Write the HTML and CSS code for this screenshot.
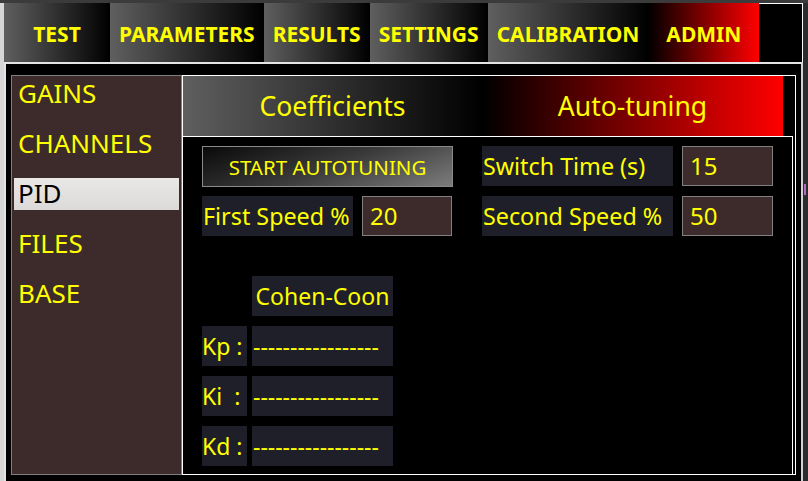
FILE: index.html
```html
<!DOCTYPE html>
<html lang="en">
<head>
  <meta charset="UTF-8" />
  <title>PID - Auto-tuning</title>
  <link rel="stylesheet" href="styles.css">
</head>
<body>
  <div class="edge"></div>
  <div class="app">
    <div class="tabbar">
      <div class="tab">TEST</div>
      <div class="tab">PARAMETERS</div>
      <div class="tab">RESULTS</div>
      <div class="tab">SETTINGS</div>
      <div class="tab">CALIBRATION</div>
      <div class="tab tab-admin">ADMIN</div>
      <div class="tab-fill"></div>
    </div>

    <div class="panel">
      <div class="sidebar">
        <div class="side-item">GAINS</div>
        <div class="side-item">CHANNELS</div>
        <div class="side-item active">PID</div>
        <div class="side-item">FILES</div>
        <div class="side-item">BASE</div>
      </div>

      <div class="pid">
        <div class="pid-tabs">
          <div class="pid-tab">Coefficients</div>
          <div class="pid-tab pid-tab-on">Auto-tuning</div>
        </div>
        <div class="pane">
          <div class="top-rows">
            <div class="col-left">
              <button class="start-btn">START AUTOTUNING</button>
              <div class="field">
                <div class="label label-first">First Speed %</div>
                <div class="input input-first">20</div>
              </div>
            </div>
            <div class="col-right">
              <div class="field">
                <div class="label label-wide">Switch Time (s)</div>
                <div class="input">15</div>
              </div>
              <div class="field">
                <div class="label label-wide">Second Speed %</div>
                <div class="input">50</div>
              </div>
            </div>
          </div>

          <div class="coef-table">
            <div></div>
            <div class="cell head">Cohen-Coon</div>
            <div class="cell key">Kp :</div>
            <div class="cell val">-----------------</div>
            <div class="cell key">Ki&nbsp;&nbsp;:</div>
            <div class="cell val">-----------------</div>
            <div class="cell key">Kd :</div>
            <div class="cell val">-----------------</div>
          </div>
        </div>
      </div>
    </div>
  </div>
  <div class="grip"></div>
</body>
</html>
```

FILE: styles.css
```css
body {
  margin: 0;
  height: 481px;
  overflow: hidden;
  display: flex;
  background-color: #2c2c2e;
  font-family: "Noto Sans", "DejaVu Sans", sans-serif;
  color: #ff0;
}
.edge {
  width: 4px;
  background-color: #d6d6d6;
}
.app {
  width: 799px;
  margin-top: 3px;
  display: flex;
  flex-direction: column;
}
body::before {
  content: "";
  position: fixed;
  top: 0; left: 0;
  width: 100%; height: 3px;
  background-color: #3b3b3b;
}

/* main tab bar */
.tabbar {
  display: flex;
  height: 59px;
  background-color: #000;
}
.tab {
  box-sizing: border-box;
  min-width: 106px;
  padding: 3px 9px 0;
  line-height: 56px;
  text-align: center;
  font-size: 21px;
  font-weight: bold;
  background: linear-gradient(to right, #5f5f5f, #000);
}
.tab-admin {
  min-width: 111px;
  background: linear-gradient(to right, #000, #f00);
}
.tab-fill {
  flex: 1;
  border-top: 1px solid #fff;
  border-right: 1px solid #fff;
}

/* content */
.panel {
  flex: 1;
  display: flex;
  align-items: flex-start;
  padding: 11px 0 0 5px;
  background-color: #000;
  border-top: 2px solid #e4e4e4;
  border-left: 2px solid #e4e4e4;
  border-right: 2px solid #d2d2d2;
}
.sidebar {
  box-sizing: border-box;
  width: 171px;
  height: 400px;
  padding: 2px;
  background-color: #3d2b2b;
  border: 1px solid #808080;
  display: flex;
  flex-direction: column;
  gap: 18px;
}
.side-item {
  height: 32px;
  line-height: 30px;
  padding-left: 4px;
  font-size: 26px;
}
.side-item.active {
  color: #000;
  background: linear-gradient(#eae8e6, #dcdad8);
}

.pid {
  box-sizing: border-box;
  width: 614px;
  height: 400px;
  border: 1px solid #fff;
  display: flex;
  flex-direction: column;
}
.pid-tabs {
  display: flex;
  height: 60px;
}
.pid-tab {
  width: 299px;
  line-height: 60px;
  text-align: center;
  font-size: 26.5px;
  background: linear-gradient(to right, #5f5f5f, #000);
}
.pid-tab-on {
  width: 301px;
  background: linear-gradient(to right, #000, #f00);
}
.pane {
  flex: 1;
  margin-right: 2px;
  padding: 9px 0 0 19px;
  border-top: 1px solid #fff;
  border-right: 1px solid #fff;
}

.top-rows {
  display: flex;
}
.col-left {
  width: 251px;
}
.col-right {
  margin-left: 29px;
  display: flex;
  flex-direction: column;
  gap: 10px;
}
.start-btn {
  display: block;
  width: 251px;
  height: 41px;
  margin-bottom: 9px;
  border: 1px solid #8a8a8a;
  background: linear-gradient(160deg, #0a0a0a, #3a3a3a 50%, #7c7c7c);
  color: #ff0;
  font-family: inherit;
  font-size: 20.5px;
}
.field {
  display: flex;
  gap: 9px;
  height: 40px;
}
.label {
  background-color: #1f1f29;
  font-size: 23.3px;
  line-height: 40px;
  padding-left: 1px;
  white-space: nowrap;
}
.label-first { width: 150px; }
.label-wide { width: 190px; }
.input {
  box-sizing: border-box;
  width: 91px;
  padding-left: 7px;
  background-color: #3d2b2b;
  border: 1px solid #808080;
  font-size: 24px;
  line-height: 38px;
}
.input-first { width: 90px; }

.coef-table {
  display: grid;
  grid-template-columns: 45px 141px;
  grid-auto-rows: 40px;
  column-gap: 5px;
  row-gap: 10px;
  margin-top: 40px;
}
.cell {
  background-color: #1f1f29;
  font-size: 23px;
  line-height: 40px;
  white-space: nowrap;
}
.head { text-align: center; }
.val { padding-left: 1px; }

.grip {
  position: fixed;
  left: 804px;
  top: 184px;
  width: 2px;
  height: 11px;
  background-color: #b070c0;
}
```
